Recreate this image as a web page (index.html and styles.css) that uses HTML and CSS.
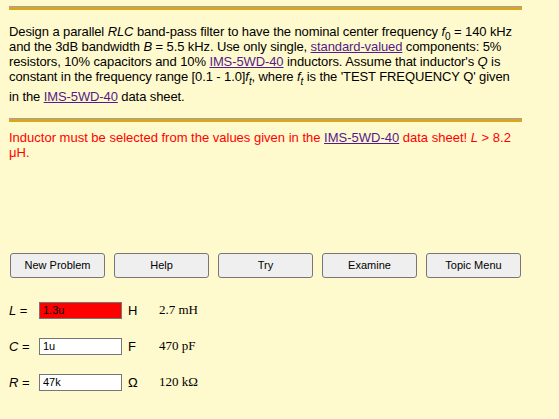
FILE: index.html
```html
<!DOCTYPE html>
<html>
<head>
<meta charset="utf-8">
<link rel="stylesheet" href="styles.css">
</head>
<body>
<div class="page">
  <div class="rule"></div>
  <p class="task">Design a parallel <i>RLC</i> band-pass filter to have the nominal center frequency <i>f</i><sub>0</sub> = 140 kHz and the 3dB bandwidth <i>B</i> = 5.5 kHz. Use only single, <a href="#">standard-valued</a> components: 5% resistors, 10% capacitors and 10% <a href="#">IMS-5WD-40</a> inductors. Assume that inductor's <i>Q</i> is constant in the frequency range [0.1 - 1.0]<i>f</i><sub class="tall"><i>t</i></sub>, where <i>f</i><sub class="tall"><i>t</i></sub> is the 'TEST FREQUENCY Q' given in the <a href="#">IMS-5WD-40</a> data sheet.</p>
  <div class="rule rule2"></div>
  <p class="msg">Inductor must be selected from the values given in the <a href="#">IMS-5WD-40</a> data sheet! <i>L</i> &gt; 8.2 μH.</p>
  <div class="buttons">
    <button class="btn">New Problem</button>
    <button class="btn">Help</button>
    <button class="btn">Try</button>
    <button class="btn">Examine</button>
    <button class="btn">Topic Menu</button>
  </div>
  <div class="fields">
    <div class="row">
      <span class="lbl"><i>L</i> =</span>
      <input class="inp bad" type="text" value="1.3u">
      <span class="unit">H</span>
      <span class="ans">2.7 mH</span>
    </div>
    <div class="row">
      <span class="lbl"><i>C</i> =</span>
      <input class="inp" type="text" value="1u">
      <span class="unit">F</span>
      <span class="ans">470 pF</span>
    </div>
    <div class="row">
      <span class="lbl"><i>R</i> =</span>
      <input class="inp" type="text" value="47k">
      <span class="unit">Ω</span>
      <span class="ans">120 kΩ</span>
    </div>
  </div>
</div>
</body>
</html>
```

FILE: styles.css
```css
html, body {
  margin: 0;
  padding: 0;
  background: #fffacd;
}
body {
  font-family: "Liberation Sans", Arial, sans-serif;
  font-size: 13px;
  color: #000;
}
.page {
  width: 513px;
  padding: 6px 0 0 9px;
}
.rule {
  height: 3px;
  background: #daa520;
  border-top: 1px solid #a0a0a0;
}
.task {
  margin: 14px 0 0 0;
  line-height: 15px;
  letter-spacing: -0.1px;
}
sub {
  font-size: 10px;
  line-height: 0;
}
sub.tall {
  line-height: 14px;
}
a {
  color: #551a8b;
  text-decoration: underline;
}
.rule2 {
  margin-top: 14px;
}
.msg {
  margin: 8px 0 0 0;
  line-height: 15px;
  color: #ff0000;
}
.buttons {
  display: flex;
  gap: 9px;
  margin-top: 93px;
  padding-left: 1px;
}
.btn {
  width: 95px;
  height: 25px;
  font-family: "Liberation Sans", Arial, sans-serif;
  font-size: 11px;
  color: #000;
  background: #efefef;
  border: 1px solid #767676;
  border-radius: 3px;
  padding: 0;
}
.fields {
  margin-top: 24px;
  display: flex;
  flex-direction: column;
  gap: 19px;
}
.row {
  display: flex;
  align-items: center;
  height: 17px;
}
.lbl {
  width: 30px;
}
.inp {
  width: 83px;
  height: 17px;
  box-sizing: border-box;
  border: 1px solid #767676;
  background: #fff;
  font-family: "Liberation Sans", Arial, sans-serif;
  font-size: 11px;
  padding: 0 3px;
  margin: 0;
  color: #000;
}
.inp.bad {
  background: #ff0000;
}
.unit {
  margin-left: 6px;
  width: 31px;
}
.ans {
  font-family: "Liberation Serif", "Times New Roman", serif;
  font-size: 13px;
}
```
